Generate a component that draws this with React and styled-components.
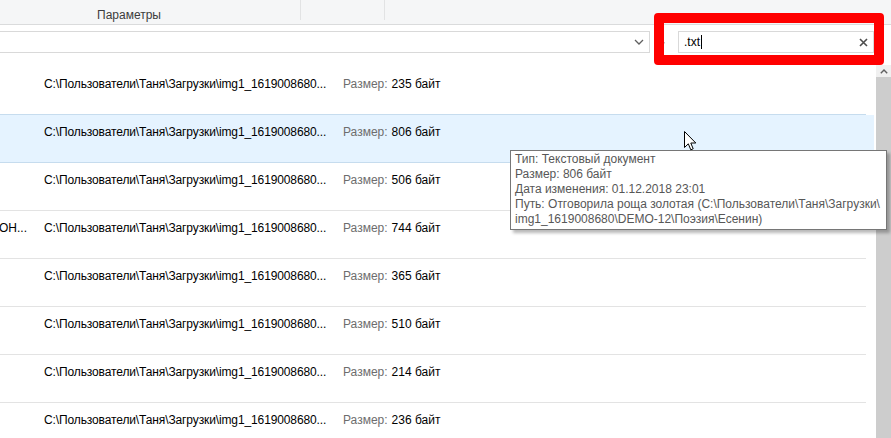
import React from 'react';
import styled, { createGlobalStyle } from 'styled-components';

const GlobalStyle = createGlobalStyle`
  html, body {
    margin: 0;
    padding: 0;
    background: #ffffff;
  }
  body {
    font-family: "Liberation Sans", Arial, sans-serif;
    font-size: 12px;
    color: #000;
    overflow: hidden;
  }
`;

const Page = styled.div`
  position: relative;
  width: 891px;
  height: 438px;
  overflow: hidden;
  display: flex;
  flex-direction: column;
  background: #fff;
`;

const Ribbon = styled.div`
  display: flex;
  height: 24px;
  background: #f5f6f7;
  border-bottom: 1px solid #dadbdc;
  flex-shrink: 0;
`;

const RibbonGroup = styled.div`
  width: ${(p) => p.$width}px;
  height: 20px;
  padding-left: ${(p) => p.$pad || 0}px;
  box-sizing: border-box;
  border-right: ${(p) => (p.$last ? 'none' : '1px solid #e2e3e4')};
  display: flex;
  align-items: flex-end;
`;

const GroupLabel = styled.span`
  color: #3c3c3c;
  font-size: 12px;
  line-height: 14px;
  margin-bottom: -2px;
`;

const AddressRow = styled.div`
  display: flex;
  align-items: stretch;
  height: 22px;
  margin-top: 6px;
  flex-shrink: 0;
`;

const AddressBox = styled.div`
  width: 651px;
  margin-left: -1px;
  box-sizing: border-box;
  border: 1px solid #d9d9d9;
  display: flex;
  align-items: center;
  justify-content: flex-end;
  padding-right: 5px;
`;

const RefreshButton = styled.div`
  width: 28px;
  display: flex;
  align-items: center;
  padding-left: 4px;
  box-sizing: border-box;
`;

const SearchBox = styled.div`
  width: 196px;
  box-sizing: border-box;
  border: 1px solid #d9d9d9;
  display: flex;
  align-items: center;
  padding: 0 5px 0 5px;
`;

const SearchText = styled.span`
  flex: 1;
  font-size: 12px;
  color: #000;
  display: flex;
  align-items: center;
`;

const Caret = styled.span`
  display: inline-block;
  width: 1px;
  height: 14px;
  background: #000;
  margin-left: 1px;
`;

const Main = styled.div`
  display: flex;
  flex: 1;
  margin-top: 12px;
  min-height: 0;
`;

const List = styled.div`
  width: 874px;
  padding-top: 2px;
  display: flex;
  flex-direction: column;
`;

const Row = styled.div`
  height: 47px;
  box-sizing: border-box;
  padding-top: 9px;
  display: flex;
  align-items: flex-start;
  background: ${(p) => (p.$selected ? '#e5f3ff' : 'transparent')};
  line-height: 16px;
  white-space: nowrap;
  flex-shrink: 0;
`;

const Divider = styled.div`
  height: 1px;
  margin-right: 8px;
  background: ${(p) => (p.$active ? '#c6dcee' : '#e3e3e3')};
  flex-shrink: 0;
`;

const NameCell = styled.div`
  width: 44px;
  overflow: hidden;
  color: #000;
`;

const NameText = styled.span`
  margin-left: -1px;
`;

const PathCell = styled.div`
  width: 299px;
  overflow: hidden;
  color: #000;
  letter-spacing: -0.12px;
`;

const SizeLabel = styled.span`
  color: #6d6d6d;
  margin-right: 4px;
`;

const SizeValue = styled.span`
  color: #000;
`;

const ScrollBar = styled.div`
  width: 15px;
  margin-left: 2px;
  display: flex;
  flex-direction: column;
  background: #f0f0f0;
`;

const ScrollArrow = styled.div`
  height: 12px;
  display: flex;
  align-items: center;
  justify-content: center;
`;

const ScrollThumb = styled.div`
  flex: 1;
  background: #cdcdcd;
`;

const Highlight = styled.div`
  position: absolute;
  left: 654px;
  top: 13px;
  width: 230px;
  height: 52px;
  box-sizing: border-box;
  border: 10px solid #ff0000;
  border-radius: 4px;
`;

const Tooltip = styled.div`
  position: absolute;
  left: 510px;
  top: 150px;
  width: 377px;
  box-sizing: border-box;
  background: #fff;
  border: 1px solid #767676;
  box-shadow: 3px 3px 3px rgba(0, 0, 0, 0.28);
  padding: 1px 4px 2px 4px;
  color: #575757;
  font-size: 12px;
  line-height: 15px;
  white-space: nowrap;
`;

const Cursor = styled.svg`
  position: absolute;
  left: 684px;
  top: 131px;
`;

const rows = [
  { size: '235 байт' },
  { size: '806 байт', selected: true },
  { size: '506 байт' },
  { size: '744 байт', name: 'ОН...' },
  { size: '365 байт' },
  { size: '510 байт' },
  { size: '214 байт' },
  { size: '236 байт' },
];

const path = 'C:\\Пользователи\\Таня\\Загрузки\\img1_1619008680...';

export default function App() {
  return (
    <Page>
      <GlobalStyle />
      <Ribbon>
        <RibbonGroup $width={301} $pad={97}>
          <GroupLabel>Параметры</GroupLabel>
        </RibbonGroup>
        <RibbonGroup $width={84} />
        <RibbonGroup $width={506} $last />
      </Ribbon>

      <AddressRow>
        <AddressBox>
          <svg width="10" height="6" viewBox="0 0 10 6">
            <path d="M1 1 L5 5 L9 1" fill="none" stroke="#606060" strokeWidth="1.3" />
          </svg>
        </AddressBox>
        <RefreshButton>
          <svg width="12" height="12" viewBox="0 0 12 12">
            <path d="M10 6 A4 4 0 1 1 8.5 2.8" fill="none" stroke="#8a8a8a" strokeWidth="1.2" />
          </svg>
        </RefreshButton>
        <SearchBox>
          <SearchText>
            .txt<Caret />
          </SearchText>
          <svg width="9" height="9" viewBox="0 0 9 9">
            <path d="M1 1 L8 8 M8 1 L1 8" stroke="#4d4d4d" strokeWidth="1.6" />
          </svg>
        </SearchBox>
      </AddressRow>

      <Main>
        <List>
          {rows.map((r, i) => (
            <React.Fragment key={i}>
              {i > 0 && (
                <Divider $active={r.selected || rows[i - 1].selected} />
              )}
              <Row $selected={r.selected}>
                <NameCell>{r.name && <NameText>{r.name}</NameText>}</NameCell>
                <PathCell>{path}</PathCell>
                <SizeLabel>Размер:</SizeLabel>
                <SizeValue>{r.size}</SizeValue>
              </Row>
            </React.Fragment>
          ))}
        </List>
        <ScrollBar>
          <ScrollArrow>
            <svg width="8" height="5" viewBox="0 0 8 5">
              <path d="M0.8 4.2 L4 1 L7.2 4.2" fill="none" stroke="#606060" strokeWidth="1.4" />
            </svg>
          </ScrollArrow>
          <ScrollThumb />
        </ScrollBar>
      </Main>

      <Highlight />

      <Tooltip>
        <div>Тип: Текстовый документ</div>
        <div>Размер: 806 байт</div>
        <div>Дата изменения: 01.12.2018 23:01</div>
        <div>Путь: Отговорила роща золотая (C:\Пользователи\Таня\Загрузки\</div>
        <div>img1_1619008680\DEMO-12\Поэзия\Есенин)</div>
      </Tooltip>

      <Cursor width="13" height="21" viewBox="0 0 13 21">
        <path
          d="M0.5 0.5 L0.5 16.5 L4.3 12.8 L6.8 18.8 L9.2 17.8 L6.8 12 L11.8 12 Z"
          fill="#fff"
          stroke="#000"
          strokeWidth="1"
          strokeLinejoin="miter"
        />
      </Cursor>
    </Page>
  );
}
